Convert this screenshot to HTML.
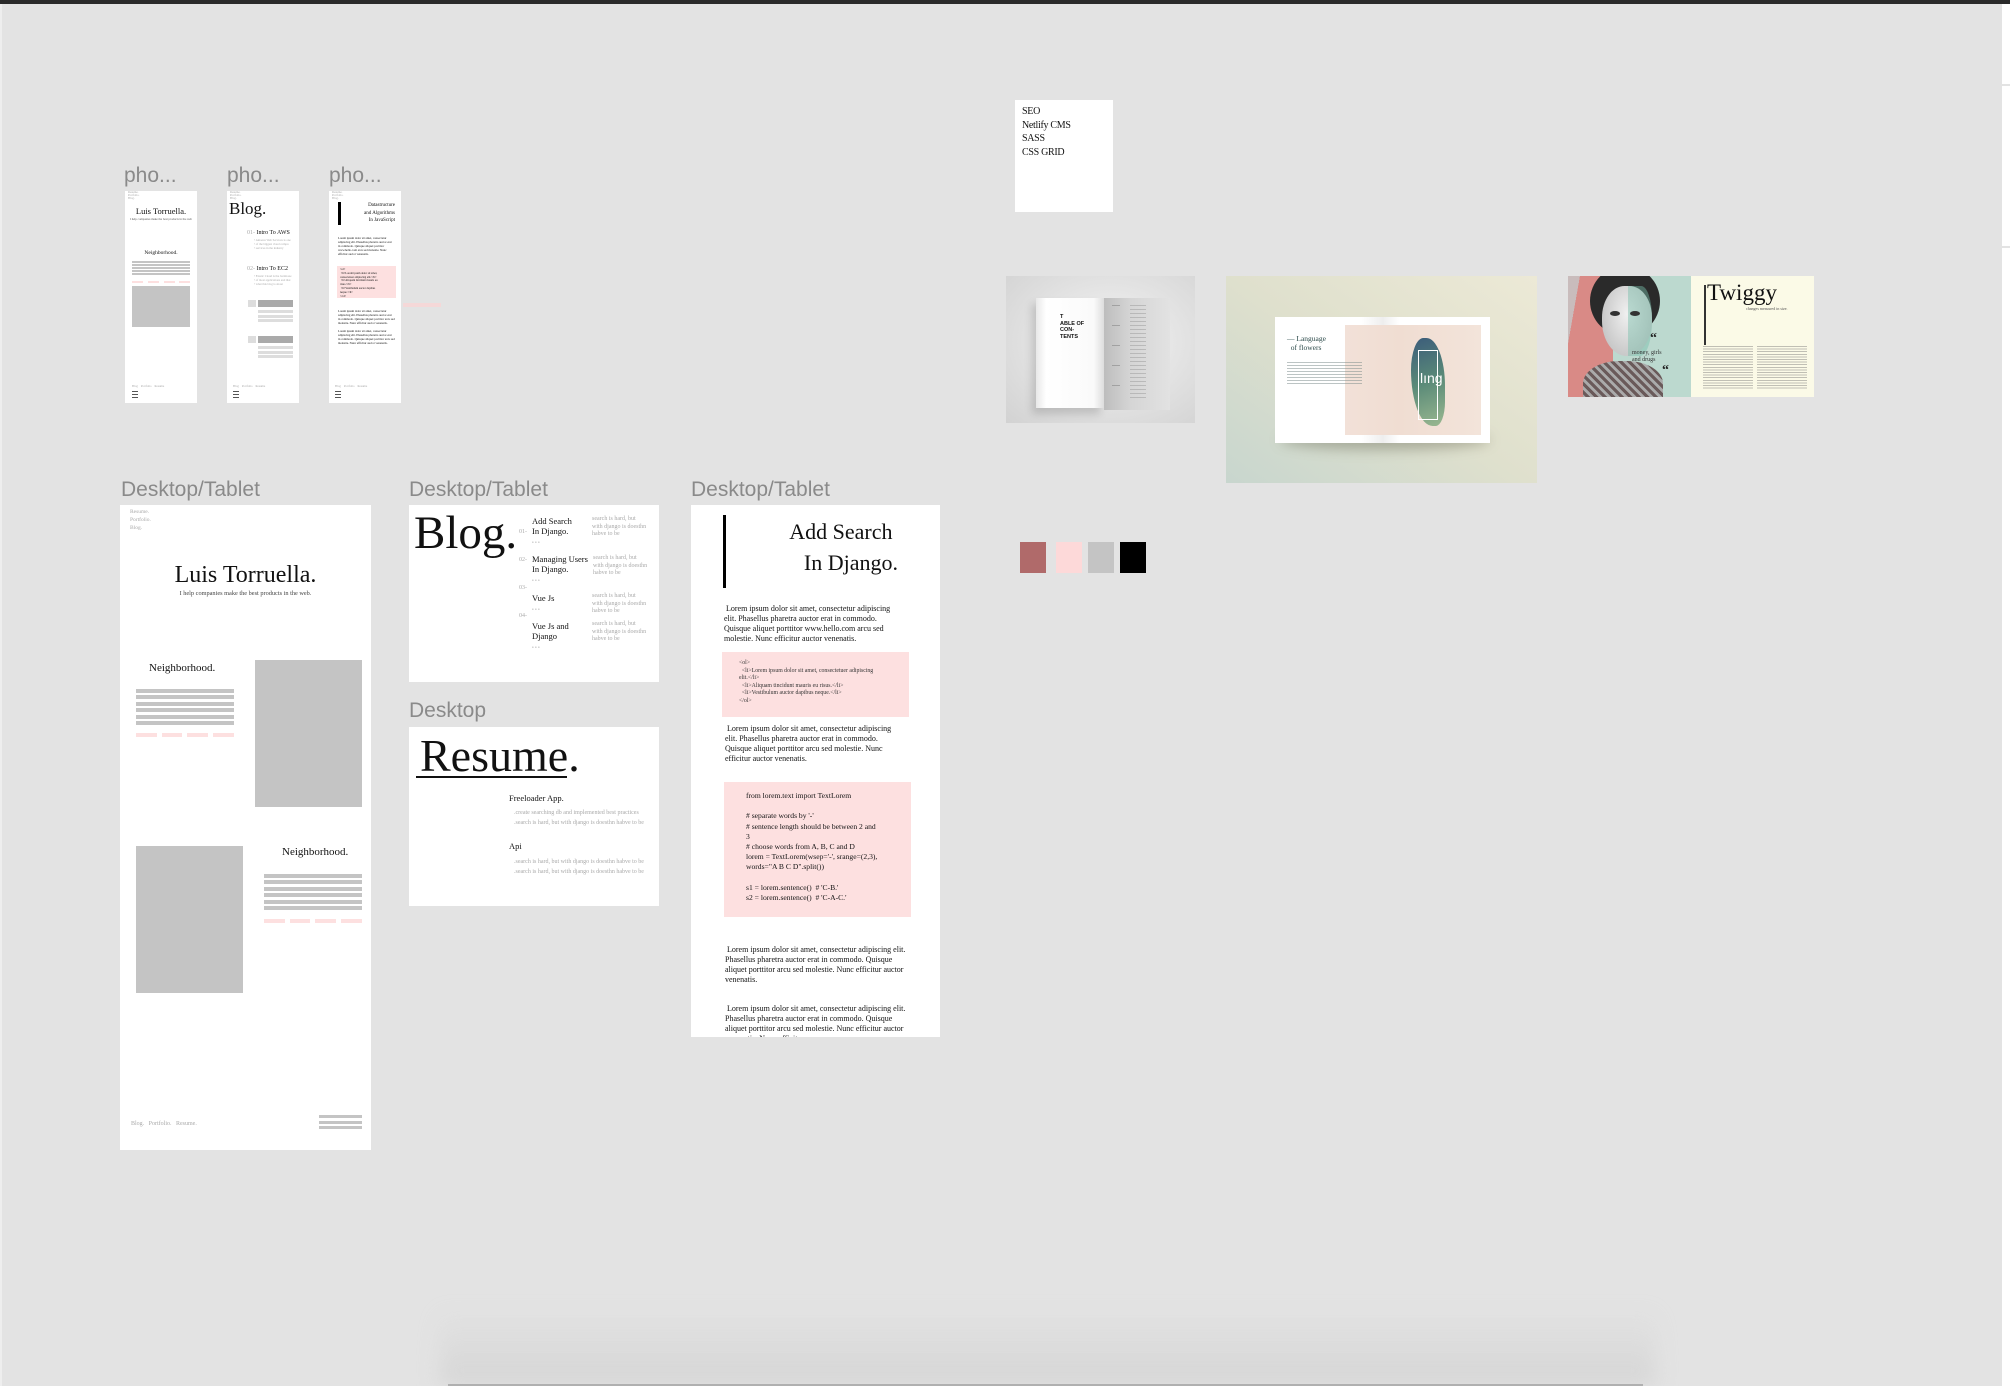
<!DOCTYPE html>
<html><head><meta charset="utf-8"><style>
*{margin:0;padding:0;box-sizing:border-box}
body{width:2010px;height:1386px;background:#e3e3e3;position:relative;overflow:hidden;font-family:"Liberation Serif",serif;color:#111}
.a{position:absolute}
.lbl{position:absolute;font-family:"Liberation Sans",sans-serif;font-size:21px;color:#8a8a8a;line-height:22px;white-space:nowrap}
.w{position:absolute;background:#fff}
.g{position:absolute;background:#c4c4c4}
.p{position:absolute;background:#fde0e0}
.t{position:absolute;white-space:nowrap}
.gr{color:#aaa}
</style></head><body>
<div class="a" style="left:0;top:0;width:2010px;height:4px;background:#2a2a2a"></div>
<div class="a" style="left:2002px;top:4px;width:8px;height:1382px;background:#fff"></div>
<div class="a" style="left:2002px;top:84px;width:8px;height:2px;background:#e3e3e3"></div>
<div class="a" style="left:2002px;top:246px;width:8px;height:2px;background:#e3e3e3"></div>
<div class="a" style="left:0;top:4px;width:2px;height:1382px;background:#eee"></div>
<!-- bottom shadow -->
<div class="a" style="left:440px;top:1310px;width:1215px;height:76px;background:linear-gradient(#e3e3e300,#d5d5d5);filter:blur(10px)"></div>
<div class="a" style="left:448px;top:1384px;width:1195px;height:2px;background:#b0b0b0"></div>

<!-- phones -->
<div class="lbl" style="left:124px;top:165px">pho...</div>
<div class="lbl" style="left:227px;top:165px">pho...</div>
<div class="lbl" style="left:329px;top:165px">pho...</div>

<div class="w" style="left:125px;top:191px;width:72px;height:212px"></div>
<div class="t gr" style="left:128px;top:191px;font-size:3px;line-height:3px">Resume.<br>Portfolio.<br>Blog.</div>
<div class="t" style="left:125px;top:206px;width:72px;text-align:center;font-size:8.5px">Luis Torruella.</div>
<div class="t" style="left:125px;top:217px;width:72px;text-align:center;font-size:3px;color:#555">I help companies make the best products in the web</div>
<div class="t" style="left:125px;top:250px;width:72px;text-align:center;font-size:5.5px">Neighborhood.</div>
<div class="g" style="left:132px;top:261px;width:58px;height:2px"></div>
<div class="g" style="left:132px;top:264px;width:58px;height:2px"></div>
<div class="g" style="left:132px;top:267px;width:58px;height:2px"></div>
<div class="g" style="left:132px;top:270px;width:58px;height:2px"></div>
<div class="g" style="left:132px;top:273px;width:58px;height:2px"></div>
<div class="p" style="left:132px;top:281px;width:11px;height:2px"></div>
<div class="p" style="left:148px;top:281px;width:11px;height:2px"></div>
<div class="p" style="left:164px;top:281px;width:11px;height:2px"></div>
<div class="p" style="left:179px;top:281px;width:11px;height:2px"></div>
<div class="g" style="left:132px;top:286px;width:58px;height:41px"></div>
<div class="t gr" style="left:132px;top:384px;font-size:3px">Blog&nbsp;&nbsp;&nbsp;&nbsp;Portfolio&nbsp;&nbsp;&nbsp;&nbsp;Resume</div>
<div class="a" style="left:132px;top:391px;width:6px;height:1.3px;background:#555;box-shadow:0 3px #555,0 6px #555"></div>

<div class="w" style="left:227px;top:191px;width:72px;height:212px"></div>
<div class="t gr" style="left:230px;top:191px;font-size:3px;line-height:3px">Resume.<br>Portfolio.<br>Blog.</div>
<div class="t" style="left:229px;top:199px;font-size:17px">Blog.</div>
<div class="t" style="left:247px;top:230px;font-size:6px"><span class="gr">01-</span> Intro To AWS</div>
<div class="t gr" style="left:254px;top:238px;font-size:3px;line-height:4px">• Amazon Web Services is one<br>• of the biggest cloud compu<br>• services in the industry</div>
<div class="t" style="left:247px;top:266px;font-size:6px"><span class="gr">02-</span> Intro To EC2</div>
<div class="t gr" style="left:254px;top:274px;font-size:3px;line-height:4px">• Elastic Cloud is the backbone<br>• of most applications and that<br>• what this blog is about</div>
<div class="a" style="left:248px;top:300px;width:8px;height:7px;background:#ddd"></div>
<div class="a" style="left:258px;top:300px;width:35px;height:7px;background:#aaa"></div>
<div class="a" style="left:258px;top:310px;width:35px;height:3px;background:#ddd"></div>
<div class="a" style="left:258px;top:315px;width:35px;height:3px;background:#ddd"></div>
<div class="a" style="left:258px;top:319px;width:35px;height:3px;background:#ddd"></div>
<div class="a" style="left:248px;top:336px;width:8px;height:7px;background:#ddd"></div>
<div class="a" style="left:258px;top:336px;width:35px;height:7px;background:#aaa"></div>
<div class="a" style="left:258px;top:346px;width:35px;height:3px;background:#ddd"></div>
<div class="a" style="left:258px;top:351px;width:35px;height:3px;background:#ddd"></div>
<div class="a" style="left:258px;top:355px;width:35px;height:3px;background:#ddd"></div>
<div class="t gr" style="left:233px;top:384px;font-size:3px">Blog&nbsp;&nbsp;&nbsp;&nbsp;Portfolio&nbsp;&nbsp;&nbsp;&nbsp;Resume</div>
<div class="a" style="left:233px;top:391px;width:6px;height:1.3px;background:#555;box-shadow:0 3px #555,0 6px #555"></div>

<div class="w" style="left:329px;top:191px;width:72px;height:212px"></div>
<div class="t gr" style="left:332px;top:191px;font-size:3px;line-height:3px">Resume.<br>Portfolio.<br>Blog.</div>
<div class="a" style="left:338px;top:202px;width:3px;height:23px;background:#000"></div>
<div class="t" style="left:340px;top:202px;width:55px;text-align:right;font-size:5px;line-height:7.5px">Datastructure<br>and Algorithms<br>In JavaScript</div>
<div class="t" style="left:338px;top:236px;font-size:3px;line-height:4px">Lorem ipsum dolor sit amet, consectetur<br>adipiscing elit. Phasellus pharetra auctor erat<br>in commodo. Quisque aliquet porttitor<br>www.hello.com arcu sed molestie. Nunc<br>efficitur auctor venenatis.</div>
<div class="p" style="left:337px;top:266px;width:59px;height:32px"></div>
<div class="t" style="left:340px;top:268px;font-size:2.8px;line-height:3.8px">&lt;ol&gt;<br>&nbsp;&lt;li&gt;Lorem ipsum dolor sit amet,<br>consectetuer adipiscing elit.&lt;/li&gt;<br>&nbsp;&lt;li&gt;Aliquam tincidunt mauris eu<br>risus.&lt;/li&gt;<br>&nbsp;&lt;li&gt;Vestibulum auctor dapibus<br>neque.&lt;/li&gt;<br>&lt;/ol&gt;</div>
<div class="t" style="left:338px;top:309px;font-size:3px;line-height:4px">Lorem ipsum dolor sit amet, consectetur<br>adipiscing elit. Phasellus pharetra auctor erat<br>in commodo. Quisque aliquet porttitor arcu sed<br>molestie. Nunc efficitur auctor venenatis.</div>
<div class="t" style="left:338px;top:329px;font-size:3px;line-height:4px">Lorem ipsum dolor sit amet, consectetur<br>adipiscing elit. Phasellus pharetra auctor erat<br>in commodo. Quisque aliquet porttitor arcu sed<br>molestie. Nunc efficitur auctor venenatis.</div>
<div class="t gr" style="left:335px;top:384px;font-size:3px">Blog&nbsp;&nbsp;&nbsp;&nbsp;Portfolio&nbsp;&nbsp;&nbsp;&nbsp;Resume</div>
<div class="a" style="left:335px;top:391px;width:6px;height:1.3px;background:#555;box-shadow:0 3px #555,0 6px #555"></div>
<div class="p" style="left:403px;top:303px;width:38px;height:4px;background:#f5d8d8"></div>

<!-- Desktop/Tablet 1 -->
<div class="lbl" style="left:121px;top:479px">Desktop/Tablet</div>
<div class="w" style="left:120px;top:505px;width:251px;height:645px"></div>
<div class="t gr" style="left:130px;top:508px;font-size:5.5px;line-height:8px">Resume.<br>Portfolio.<br>Blog.</div>
<div class="t" style="left:120px;top:562px;width:251px;text-align:center;font-size:24px">Luis Torruella.</div>
<div class="t" style="left:120px;top:590px;width:251px;text-align:center;font-size:6.3px;color:#444">I help companies make the best products in the web.</div>
<div class="t" style="left:149px;top:662px;font-size:11px">Neighborhood.</div>
<div class="g" style="left:136px;top:689px;width:98px;height:4px"></div>
<div class="g" style="left:136px;top:695px;width:98px;height:4px"></div>
<div class="g" style="left:136px;top:702px;width:98px;height:4px"></div>
<div class="g" style="left:136px;top:708px;width:98px;height:4px"></div>
<div class="g" style="left:136px;top:715px;width:98px;height:4px"></div>
<div class="g" style="left:136px;top:721px;width:98px;height:4px"></div>
<div class="p" style="left:136px;top:733px;width:21px;height:4px"></div>
<div class="p" style="left:162px;top:733px;width:20px;height:4px"></div>
<div class="p" style="left:187px;top:733px;width:21px;height:4px"></div>
<div class="p" style="left:213px;top:733px;width:21px;height:4px"></div>
<div class="g" style="left:255px;top:660px;width:107px;height:147px"></div>
<div class="g" style="left:136px;top:846px;width:107px;height:147px"></div>
<div class="t" style="left:282px;top:846px;font-size:11px">Neighborhood.</div>
<div class="g" style="left:264px;top:874px;width:98px;height:4px"></div>
<div class="g" style="left:264px;top:880px;width:98px;height:4px"></div>
<div class="g" style="left:264px;top:887px;width:98px;height:4px"></div>
<div class="g" style="left:264px;top:893px;width:98px;height:4px"></div>
<div class="g" style="left:264px;top:900px;width:98px;height:4px"></div>
<div class="g" style="left:264px;top:906px;width:98px;height:4px"></div>
<div class="p" style="left:264px;top:919px;width:21px;height:4px"></div>
<div class="p" style="left:290px;top:919px;width:20px;height:4px"></div>
<div class="p" style="left:315px;top:919px;width:21px;height:4px"></div>
<div class="p" style="left:341px;top:919px;width:21px;height:4px"></div>
<div class="t gr" style="left:131px;top:1121px;font-size:6px">Blog.&nbsp;&nbsp;&nbsp;Portfolio.&nbsp;&nbsp;&nbsp;Resume.</div>
<div class="g" style="left:319px;top:1115px;width:43px;height:3px"></div>
<div class="g" style="left:319px;top:1121px;width:43px;height:3px"></div>
<div class="g" style="left:319px;top:1126px;width:43px;height:3px"></div>

<!-- Blog frame -->
<div class="lbl" style="left:409px;top:479px">Desktop/Tablet</div>
<div class="w" style="left:409px;top:505px;width:250px;height:177px"></div>
<div class="t" style="left:414px;top:505px;font-size:47px;line-height:56px">Blog.</div>
<div class="t gr" style="left:519px;top:518px;font-size:6px;line-height:28px">01-<br>02-<br>03-<br>04-</div>
<div class="t" style="left:532px;top:516px;font-size:8.5px;line-height:10px">Add Search<br>In Django.<br><span class="gr" style="font-size:5px">• • •</span></div>
<div class="t" style="left:532px;top:554px;font-size:8.5px;line-height:10px">Managing Users<br>In Django.<br><span class="gr" style="font-size:5px">• • •</span></div>
<div class="t" style="left:532px;top:593px;font-size:8.5px;line-height:10px">Vue Js<br><span class="gr" style="font-size:5px">• • •</span></div>
<div class="t" style="left:532px;top:621px;font-size:8.5px;line-height:10px">Vue Js and<br>Django<br><span class="gr" style="font-size:5px">• • •</span></div>
<div class="t gr" style="left:592px;top:516px;font-size:6px;line-height:7.5px">search is hard, but<br>with django is doesthn<br>habve to be</div>
<div class="t gr" style="left:593px;top:555px;font-size:6px;line-height:7.5px">search is hard, but<br>with django is doesthn<br>habve to be</div>
<div class="t gr" style="left:592px;top:593px;font-size:6px;line-height:7.5px">search is hard, but<br>with django is doesthn<br>habve to be</div>
<div class="t gr" style="left:592px;top:621px;font-size:6px;line-height:7.5px">search is hard, but<br>with django is doesthn<br>habve to be</div>

<!-- Resume -->
<div class="lbl" style="left:409px;top:700px">Desktop</div>
<div class="w" style="left:409px;top:727px;width:250px;height:179px"></div>
<div class="t" style="left:420px;top:729px;font-size:46px;line-height:54px">Resume.</div>
<div class="a" style="left:416px;top:776px;width:151px;height:2px;background:#111"></div>
<div class="t" style="left:509px;top:793px;font-size:8.5px">Freeloader App.</div>
<div class="t gr" style="left:514px;top:808px;font-size:6px;line-height:10px">.create searching db and implemented best practices<br>.search is hard, but with django is doesthn habve to be</div>
<div class="t" style="left:509px;top:841px;font-size:8.5px">Api</div>
<div class="t gr" style="left:514px;top:857px;font-size:6px;line-height:10px">.search is hard, but with django is doesthn habve to be<br>.search is hard, but with django is doesthn habve to be</div>

<!-- Article -->
<div class="lbl" style="left:691px;top:479px">Desktop/Tablet</div>
<div class="w" style="left:691px;top:505px;width:249px;height:532px"></div>
<div class="a" style="left:723px;top:515px;width:3px;height:73px;background:#000"></div>
<div class="t" style="left:740px;top:516px;width:158px;text-align:right;font-size:22px;line-height:31px">Add Search&nbsp;<br>In Django.</div>
<div class="t" style="left:724px;top:604px;font-size:8px;line-height:10px">&nbsp;Lorem ipsum dolor sit amet, consectetur adipiscing<br>elit. Phasellus pharetra auctor erat in commodo.<br>Quisque aliquet porttitor www.hello.com arcu sed<br>molestie. Nunc efficitur auctor venenatis.</div>
<div class="p" style="left:722px;top:652px;width:187px;height:65px"></div>
<div class="t" style="left:739px;top:660px;font-size:5.8px;line-height:7.5px;color:#333">&lt;ol&gt;<br>&nbsp;&nbsp;&lt;li&gt;Lorem ipsum dolor sit amet, consectetuer adipiscing<br>elit.&lt;/li&gt;<br>&nbsp;&nbsp;&lt;li&gt;Aliquam tincidunt mauris eu risus.&lt;/li&gt;<br>&nbsp;&nbsp;&lt;li&gt;Vestibulum auctor dapibus neque.&lt;/li&gt;<br>&lt;/ol&gt;</div>
<div class="t" style="left:725px;top:724px;font-size:8px;line-height:10px">&nbsp;Lorem ipsum dolor sit amet, consectetur adipiscing<br>elit. Phasellus pharetra auctor erat in commodo.<br>Quisque aliquet porttitor arcu sed molestie. Nunc<br>efficitur auctor venenatis.</div>
<div class="p" style="left:724px;top:782px;width:187px;height:135px"></div>
<div class="t" style="left:746px;top:791px;font-size:7.6px;line-height:10.2px">from lorem.text import TextLorem<br><br># separate words by '-'<br># sentence length should be between 2 and<br>3<br># choose words from A, B, C and D<br>lorem = TextLorem(wsep='-', srange=(2,3),<br>words="A B C D".split())<br><br>s1 = lorem.sentence()&nbsp; # 'C-B.'<br>s2 = lorem.sentence()&nbsp; # 'C-A-C.'</div>
<div class="t" style="left:725px;top:945px;font-size:8px;line-height:10px">&nbsp;Lorem ipsum dolor sit amet, consectetur adipiscing elit.<br>Phasellus pharetra auctor erat in commodo. Quisque<br>aliquet porttitor arcu sed molestie. Nunc efficitur auctor<br>venenatis.</div>
<div class="a" style="left:691px;top:1004px;width:249px;height:33px;overflow:hidden"><div class="t" style="left:34px;top:0;font-size:8px;line-height:10px">&nbsp;Lorem ipsum dolor sit amet, consectetur adipiscing elit.<br>Phasellus pharetra auctor erat in commodo. Quisque<br>aliquet porttitor arcu sed molestie. Nunc efficitur auctor<br>venenatis. Nunc efficitur</div></div>

<!-- SEO -->
<div class="w" style="left:1015px;top:100px;width:98px;height:112px"></div>
<div class="t" style="left:1022px;top:105px;font-size:10px;line-height:13.5px;letter-spacing:-0.3px">SEO<br>Netlify CMS<br>SASS<br>CSS GRID</div>

<!-- Book 1 -->
<div class="a" style="left:1006px;top:276px;width:189px;height:147px;background:radial-gradient(ellipse at 55% 45%,#f4f4f4,#d2d2d2)"></div>
<div class="a" style="left:1036px;top:298px;width:68px;height:110px;background:linear-gradient(90deg,#e8e8e8,#fff 15%,#fafafa 85%,#ddd);box-shadow:-4px 6px 8px rgba(0,0,0,.15)"></div>
<div class="a" style="left:1104px;top:298px;width:66px;height:112px;background:linear-gradient(90deg,#bdbdbd,#d5d5d5 40%,#e2e2e2)"></div>
<div class="t" style="left:1060px;top:314px;font-family:'Liberation Sans',sans-serif;font-weight:bold;font-size:5.5px;line-height:6.5px">T<br>ABLE OF<br>CON-<br>TENTS</div>
<div class="a" style="left:1130px;top:305px;width:16px;height:95px;background:repeating-linear-gradient(#999 0 1px,transparent 1px 4px);opacity:.5"></div>
<div class="a" style="left:1112px;top:305px;width:8px;height:95px;background:repeating-linear-gradient(#888 0 1px,transparent 1px 20px);opacity:.6"></div>

<!-- Book 2 -->
<div class="a" style="left:1226px;top:276px;width:311px;height:207px;background:linear-gradient(215deg,#ece9d6,#dfe0cd 50%,#c8d6ce)"></div>
<div class="a" style="left:1280px;top:430px;width:210px;height:20px;background:rgba(80,80,60,.35);filter:blur(6px);border-radius:50%"></div>
<div class="a" style="left:1275px;top:317px;width:108px;height:126px;background:linear-gradient(90deg,#fff 80%,#eee)"></div>
<div class="a" style="left:1383px;top:317px;width:107px;height:126px;background:linear-gradient(90deg,#eee,#fff 15%)"></div>
<div class="a" style="left:1345px;top:325px;width:136px;height:110px;background:linear-gradient(90deg,#f2e1d8,#f0ddd2 40%,#f3e4da)"></div>
<div class="a" style="left:1411px;top:338px;width:34px;height:88px;background:linear-gradient(160deg,#3b5c7a,#5a8a78 50%,#9ab890);border-radius:40% 60% 30% 70%"></div>
<div class="a" style="left:1418px;top:350px;width:20px;height:70px;border:1px solid #fff"></div>
<div class="t" style="left:1420px;top:370px;font-size:14px;color:#fff;font-family:'Liberation Sans',sans-serif">lıng</div>
<div class="t" style="left:1287px;top:334px;font-size:7.5px;line-height:9px;color:#2c4a4a">— Language<br>&nbsp;&nbsp;of flowers</div>
<div class="a" style="left:1287px;top:362px;width:75px;height:22px;background:repeating-linear-gradient(#7a8a88 0 1px,transparent 1px 3px);opacity:.5"></div>

<!-- Twiggy -->
<div class="a" style="left:1568px;top:276px;width:123px;height:121px;background:#bcd9cf;overflow:hidden">
  <div class="a" style="left:0;top:0;width:45px;height:121px;background:linear-gradient(100deg,#c9bcbc 0 18%,#d98a86 18%)"></div>
  <div class="a" style="left:22px;top:-10px;width:70px;height:70px;border-radius:50%;background:#2a2a2a"></div>
  <div class="a" style="left:34px;top:10px;width:50px;height:70px;border-radius:45% 45% 50% 50%;background:radial-gradient(ellipse at 50% 40%,#f0f0f0,#b8b8b8)"></div>
  <div class="a" style="left:60px;top:10px;width:24px;height:70px;border-radius:0 45% 50% 0;background:rgba(120,190,170,.45)"></div>
  <div class="a" style="left:42px;top:35px;width:10px;height:5px;border-radius:50%;background:#333;box-shadow:20px 0 #333"></div>
  <div class="a" style="left:15px;top:85px;width:80px;height:50px;border-radius:45% 45% 0 0;background:repeating-linear-gradient(45deg,#6a5a5a 0 3px,#aaa 3px 6px)"></div>
</div>
<div class="t" style="left:1650px;top:331px;font-size:14px;font-weight:bold;color:#222">“</div>
<div class="t" style="left:1632px;top:350px;font-size:6px;line-height:7px;color:#333">money, girls<br>and drugs</div>
<div class="t" style="left:1662px;top:363px;font-size:14px;font-weight:bold;color:#222">“</div>
<div class="a" style="left:1691px;top:276px;width:123px;height:121px;background:#fbfae7"></div>
<div class="a" style="left:1704px;top:285px;width:2px;height:60px;background:#333"></div>
<div class="t" style="left:1707px;top:280px;font-size:23px;color:#111">Twiggy</div>
<div class="t" style="left:1746px;top:306px;font-size:4px;color:#555">changes measured in size.</div>
<div class="a" style="left:1703px;top:346px;width:50px;height:44px;background:repeating-linear-gradient(#777 0 1px,transparent 1px 2.6px);opacity:.45"></div>
<div class="a" style="left:1757px;top:346px;width:50px;height:44px;background:repeating-linear-gradient(#777 0 1px,transparent 1px 2.6px);opacity:.45"></div>

<!-- swatches -->
<div class="a" style="left:1020px;top:542px;width:26px;height:31px;background:#b06a6a"></div>
<div class="a" style="left:1056px;top:542px;width:26px;height:31px;background:#fdd9d9"></div>
<div class="a" style="left:1088px;top:542px;width:26px;height:31px;background:#c4c4c4"></div>
<div class="a" style="left:1120px;top:542px;width:26px;height:31px;background:#000"></div>
</body></html>
